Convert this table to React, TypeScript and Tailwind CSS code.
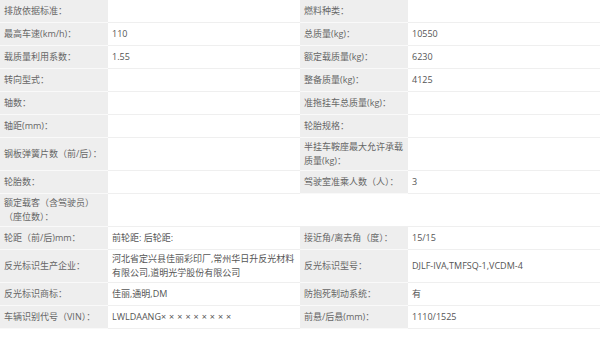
import React from 'react';

type Cell = { label: string; value?: React.ReactNode };
type Row = { left: Cell; right?: Cell; wide?: boolean };

const rows: Row[] = [
  { left: { label: '排放依据标准：' }, right: { label: '燃料种类：' } },
  { left: { label: '最高车速(km/h)：', value: '110' }, right: { label: '总质量(kg)：', value: '10550' } },
  { left: { label: '载质量利用系数：', value: '1.55' }, right: { label: '额定载质量(kg)：', value: '6230' } },
  { left: { label: '转向型式：' }, right: { label: '整备质量(kg)：', value: '4125' } },
  { left: { label: '轴数：' }, right: { label: '准拖挂车总质量(kg)：' } },
  { left: { label: '轴距(mm)：' }, right: { label: '轮胎规格：' } },
  { left: { label: '钢板弹簧片数（前/后）：' }, right: { label: '半挂车鞍座最大允许承载质量(kg)：' } },
  { left: { label: '轮胎数：' }, right: { label: '驾驶室准乘人数（人）：', value: '3' } },
  { left: { label: '额定载客（含驾驶员）（座位数）：' }, wide: true },
  { left: { label: '轮距（前/后)mm：', value: '前轮距: 后轮距:' }, right: { label: '接近角/离去角（度）：', value: '15/15' } },
  {
    left: { label: '反光标识生产企业：', value: '河北省定兴县佳丽彩印厂,常州华日升反光材料有限公司,道明光学股份有限公司' },
    right: { label: '反光标识型号：', value: 'DJLF-IVA,TMFSQ-1,VCDM-4' },
  },
  { left: { label: '反光标识商标：', value: '佳丽,通明,DM' }, right: { label: '防抱死制动系统：', value: '有' } },
  {
    left: {
      label: '车辆识别代号（VIN）：',
      value: (
        <>
          LWLDAANG<span className="tracking-[3px]">×××××××××</span>
        </>
      ),
    },
    right: { label: '前悬/后悬(mm)：', value: '1110/1525' },
  },
];

function Label({ text }: { text: string }) {
  return (
    <div className="flex items-center min-h-[23px] py-[2px] pl-[4px] pr-[2px] bg-[#eeeeee] text-[#666] border-b border-[#f9f9f9]">
      {text}
    </div>
  );
}

function Value({ children, wide }: { children?: React.ReactNode; wide?: boolean }) {
  return (
    <div
      className={`flex items-center min-h-[23px] py-[2px] pl-[4px] pr-[4px] bg-white text-[#555] border-b border-[#efefef] ${
        wide ? 'col-span-3' : ''
      }`}
    >
      {children}
    </div>
  );
}

export default function App() {
  return (
    <div className="w-[600px] h-[341px] bg-white overflow-hidden font-['Open_Sans','Noto_Sans_CJK_SC',sans-serif] text-[9px] leading-[14px]">
      <div className="grid grid-cols-[108px_192px_108px_192px]">
        {rows.map((row, i) => (
          <React.Fragment key={i}>
            <Label text={row.left.label} />
            <Value wide={row.wide}>{row.left.value}</Value>
            {row.right && (
              <>
                <Label text={row.right.label} />
                <Value>{row.right.value}</Value>
              </>
            )}
          </React.Fragment>
        ))}
      </div>
    </div>
  );
}
